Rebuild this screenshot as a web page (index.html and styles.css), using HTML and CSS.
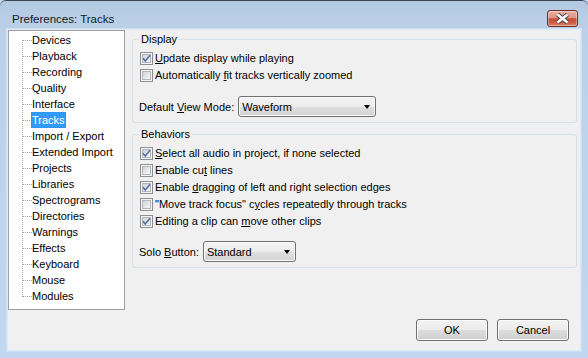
FILE: index.html
```html
<!DOCTYPE html>
<html>
<head>
<meta charset="utf-8">
<title>Preferences: Tracks</title>
<link rel="stylesheet" href="styles.css">
</head>
<body>
<div class="window">
  <div class="titlebar">
    <span class="title">Preferences: Tracks</span>
    <span class="close">
      <svg width="29" height="15" viewBox="0 0 29 15">
        <path d="M9.5 3.5 L19.5 11.5 M19.5 3.5 L9.5 11.5" stroke="#4a4a4a" stroke-width="4.4" fill="none"/>
        <path d="M9.5 3.5 L19.5 11.5 M19.5 3.5 L9.5 11.5" stroke="#ffffff" stroke-width="2.4" fill="none"/>
      </svg>
    </span>
  </div>
  <div class="client">
    <div class="main">
      <ul class="tree">
        <li><span class="lbl">Devices</span></li>
        <li><span class="lbl">Playback</span></li>
        <li><span class="lbl">Recording</span></li>
        <li><span class="lbl">Quality</span></li>
        <li><span class="lbl">Interface</span></li>
        <li><span class="lbl selected">Tracks</span></li>
        <li><span class="lbl">Import / Export</span></li>
        <li><span class="lbl">Extended Import</span></li>
        <li><span class="lbl">Projects</span></li>
        <li><span class="lbl">Libraries</span></li>
        <li><span class="lbl">Spectrograms</span></li>
        <li><span class="lbl">Directories</span></li>
        <li><span class="lbl">Warnings</span></li>
        <li><span class="lbl">Effects</span></li>
        <li><span class="lbl">Keyboard</span></li>
        <li><span class="lbl">Mouse</span></li>
        <li><span class="lbl">Modules</span></li>
      </ul>
      <div class="groups">
        <fieldset class="group display">
          <legend>Display</legend>
          <div class="cbrow"><span class="cb checked"><svg width="11" height="11" viewBox="0 0 11 11"><path d="M2 5.2 L4.3 8 L9 2.2" stroke="#5c71a6" stroke-width="1.7" fill="none"/></svg></span><span><u>U</u>pdate display while playing</span></div>
          <div class="cbrow"><span class="cb"></span><span>Automatically <u>f</u>it tracks vertically zoomed</span></div>
          <div class="comborow">
            <span>Default <u>V</u>iew Mode:</span>
            <div class="combo view"><span>Waveform</span><span class="arrow"></span></div>
          </div>
        </fieldset>
        <fieldset class="group behaviors">
          <legend>Behaviors</legend>
          <div class="cbrow"><span class="cb checked"><svg width="11" height="11" viewBox="0 0 11 11"><path d="M2 5.2 L4.3 8 L9 2.2" stroke="#5c71a6" stroke-width="1.7" fill="none"/></svg></span><span><u>S</u>elect all audio in project, if none selected</span></div>
          <div class="cbrow"><span class="cb"></span><span>Enable cu<u>t</u> lines</span></div>
          <div class="cbrow"><span class="cb checked"><svg width="11" height="11" viewBox="0 0 11 11"><path d="M2 5.2 L4.3 8 L9 2.2" stroke="#5c71a6" stroke-width="1.7" fill="none"/></svg></span><span>Enable <u>d</u>ragging of left and right selection edges</span></div>
          <div class="cbrow"><span class="cb"></span><span>"Move track focus" c<u>y</u>cles repeatedly through tracks</span></div>
          <div class="cbrow"><span class="cb checked"><svg width="11" height="11" viewBox="0 0 11 11"><path d="M2 5.2 L4.3 8 L9 2.2" stroke="#5c71a6" stroke-width="1.7" fill="none"/></svg></span><span>Editing a clip can <u>m</u>ove other clips</span></div>
          <div class="comborow solo">
            <span>Solo <u>B</u>utton:</span>
            <div class="combo solo-combo"><span>Standard</span><span class="arrow"></span></div>
          </div>
        </fieldset>
      </div>
    </div>
    <div class="buttons">
      <div class="btn">OK</div>
      <div class="btn">Cancel</div>
    </div>
  </div>
</div>
</body>
</html>
```
FILE: styles.css
```css
html, body {
  margin: 0;
  padding: 0;
}
body {
  width: 588px;
  height: 358px;
  overflow: hidden;
  font-family: "Liberation Sans", Arial, sans-serif;
  font-size: 11px;
  color: #000;
  background: #c1d7ef;
}
.window {
  width: 588px;
  height: 358px;
  box-sizing: border-box;
  display: flex;
  flex-direction: column;
  padding: 0 8px 8px;
  border-top: 1px solid #3c4755;
  border-radius: 6px 6px 0 0;
  background: linear-gradient(to bottom, #b3c9e2 0px, #bcd1e9 30px, #c0d7ef 100%);
}
.titlebar {
  height: 29px;
  margin: 0 -8px;
  padding: 0 10px 0 12px;
  display: flex;
  align-items: flex-start;
  justify-content: space-between;
  flex: none;
}
.title {
  margin-top: 11px;
  font-size: 11.5px;
  line-height: 14px;
  color: #121a26;
}
.close {
  margin-top: 9px;
  width: 31px;
  height: 17px;
  box-sizing: border-box;
  border: 1px solid #70302a;
  border-radius: 3px;
  background: linear-gradient(to bottom, #eab1a6 0%, #dd9383 45%, #c84a35 52%, #cf5f47 80%, #dd8a6c 100%);
  box-shadow: inset 0 0 0 1px rgba(255, 255, 255, 0.35);
  display: flex;
  align-items: center;
  justify-content: center;
}
.close svg {
  display: block;
}
.client {
  flex: 1;
  background: #f0f0f0;
  display: flex;
  flex-direction: column;
  box-shadow: 0 0 0 1px #dbe8f6, 0 0 0 2px #cfe1f3;
}
.main {
  display: flex;
  height: 280px;
  flex: none;
}
.tree {
  margin: 0;
  padding: 1px 0 0;
  list-style: none;
  width: 117px;
  height: 280px;
  box-sizing: border-box;
  border: 1px solid #a0a0a0;
  background: #fff;
  flex: none;
}
.tree li {
  height: 16px;
  padding-left: 22px;
  display: flex;
  align-items: center;
  background-image:
    repeating-linear-gradient(to right, #a0a0a0 0 1px, transparent 1px 2px),
    repeating-linear-gradient(to bottom, #a0a0a0 0 1px, transparent 1px 2px);
  background-size: 9px 1px, 1px 16px;
  background-position: 14px 8px, 13px 0;
  background-repeat: no-repeat;
}
.tree li:first-child {
  background-size: 9px 1px, 1px 8px;
  background-position: 14px 8px, 13px 8px;
}
.tree li:last-child {
  background-size: 9px 1px, 1px 9px;
  background-position: 14px 8px, 13px 0;
}
.lbl {
  line-height: 14px;
  border: 1px solid transparent;
  white-space: nowrap;
}
.lbl.selected {
  background: #3399ff;
  color: #fff;
  border: 1px dotted #c96a10;
}
.groups {
  margin-left: 7px;
  width: 445px;
  display: flex;
  flex-direction: column;
  padding-top: 2px;
}
.group {
  margin: 0;
  padding: 4px 6px 5px;
  border: 1px solid #d5dfe5;
  border-radius: 3px;
  min-width: 0;
}
.group legend {
  padding: 0 2px;
  line-height: 14px;
  color: #000;
}
.behaviors {
  margin-top: 4px;
}
.cbrow {
  height: 17px;
  display: flex;
  align-items: center;
  gap: 2px;
  line-height: 17px;
  white-space: nowrap;
}
.cb {
  margin-left: 1px;
  width: 13px;
  height: 13px;
  box-sizing: border-box;
  border: 1px solid #8e8f8f;
  padding: 1px;
  background: #f4f4f4;
  flex: none;
  position: relative;
  display: flex;
}
.cb::before {
  content: "";
  flex: 1;
  border: 1px solid #b3b8bf;
  background: linear-gradient(135deg, #cdd1d6 0%, #e6e8ea 55%, #f7f7f7 100%);
}
.cb svg {
  position: absolute;
  left: 0;
  top: 0;
}
.comborow {
  margin-top: 12px;
  height: 21px;
  display: flex;
  align-items: center;
  gap: 4px;
  white-space: nowrap;
}
.comborow.solo {
  margin-top: 11px;
}
.combo {
  height: 21px;
  box-sizing: border-box;
  border: 1px solid #707070;
  border-radius: 3px;
  background: linear-gradient(to bottom, #f4f4f4 0%, #ececec 50%, #dfdfdf 51%, #d3d3d3 100%);
  box-shadow: inset 0 0 0 1px #fbfbfb;
  display: flex;
  align-items: center;
  justify-content: space-between;
  padding: 0 5px 0 3px;
}
.combo.view {
  width: 138px;
}
.combo.solo-combo {
  width: 93px;
}
.arrow {
  width: 0;
  height: 0;
  border-left: 3.5px solid transparent;
  border-right: 3.5px solid transparent;
  border-top: 4px solid #000;
  margin-top: 1px;
}
.buttons {
  margin-top: 9px;
  padding-right: 11px;
  display: flex;
  justify-content: flex-end;
  gap: 9px;
}
.btn {
  width: 72px;
  height: 22px;
  box-sizing: border-box;
  border: 1px solid #707070;
  border-radius: 3px;
  background: linear-gradient(to bottom, #f2f2f2 0%, #ebebeb 50%, #dddddd 51%, #cfcfcf 100%);
  box-shadow: inset 0 0 0 1px #fcfcfc;
  display: flex;
  align-items: center;
  justify-content: center;
}
```
